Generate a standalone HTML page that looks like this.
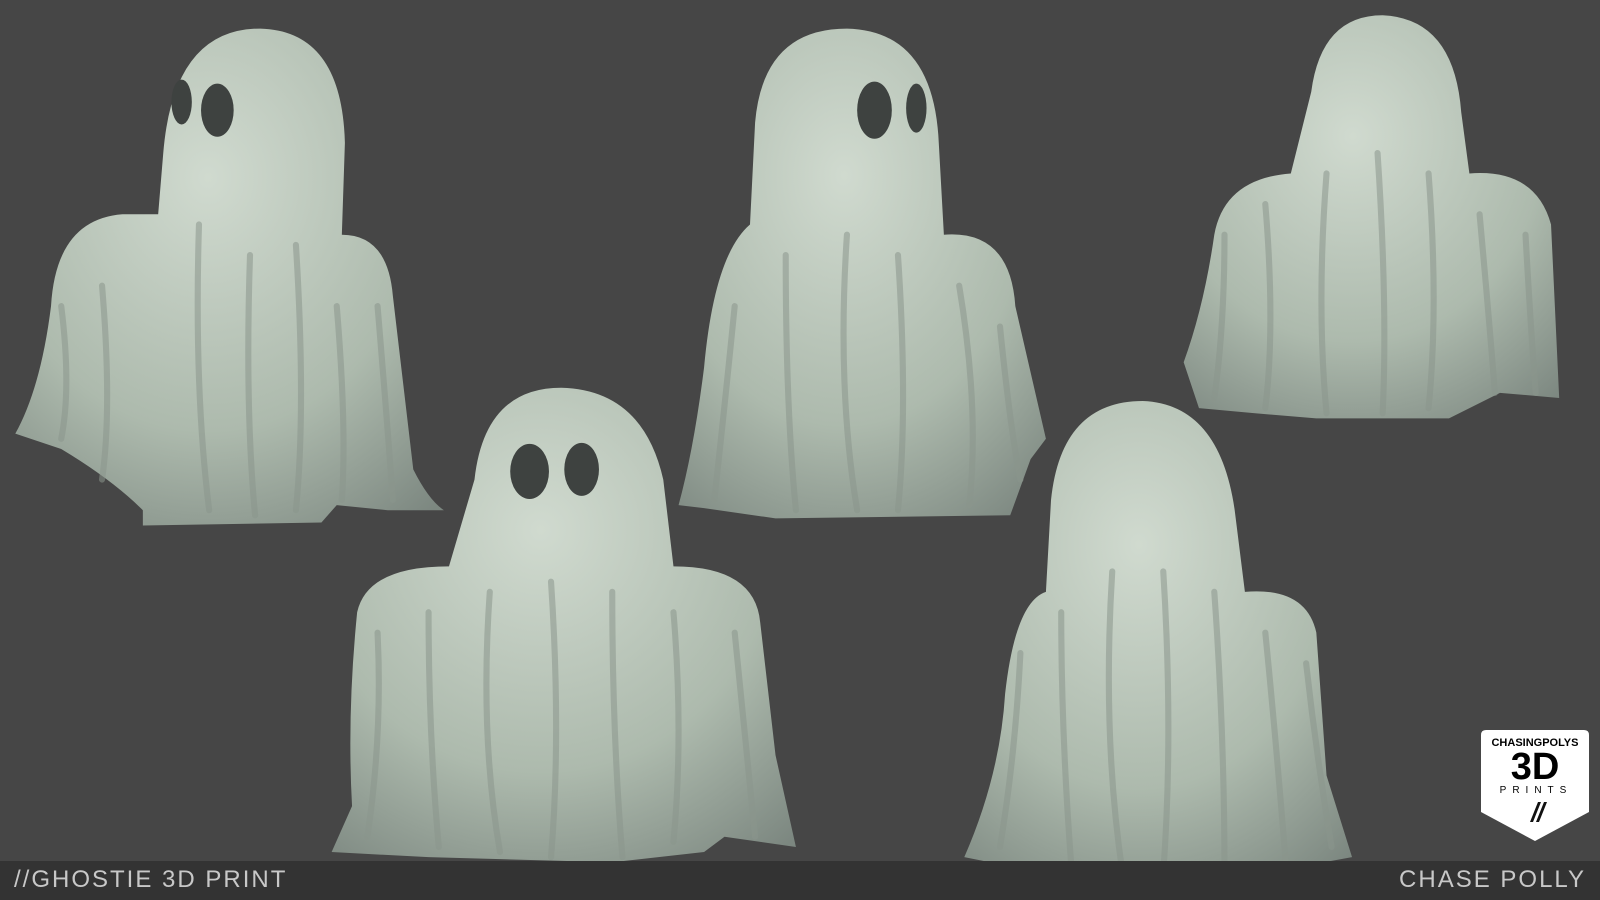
<!DOCTYPE html><html><head><style>
html,body{margin:0;width:1600px;height:900px;overflow:hidden;background:#464646;font-family:"Liberation Sans",sans-serif}
.bar{position:absolute;left:0;top:861px;width:1600px;height:39px;background:#333}
.t{position:absolute;top:866px;color:#c8c8c8;font-size:24px;letter-spacing:2px}
</style></head><body>
<svg width="1600" height="900" viewBox="0 0 1568 882" style="position:absolute;left:0;top:0">
<defs>
<radialGradient id="g" cx="0.45" cy="0.3" r="0.85"><stop offset="0" stop-color="#d0dacf"/><stop offset="0.6" stop-color="#adbaad"/><stop offset="1" stop-color="#7c8780"/></radialGradient>
</defs>
<g fill="url(#g)">
<path d="M160 150 Q170 28 255 28 Q335 30 338 140 L335 230 Q380 230 385 290 L405 460 Q420 490 435 500 L380 500 L330 495 L315 512 L140 515 L140 500 Q110 470 60 440 L15 425 Q40 380 50 300 Q55 215 120 210 L155 210 Z"/>
<path d="M740 120 Q748 28 830 28 Q915 30 920 140 L925 230 Q990 225 995 300 L1025 430 L1010 450 L990 505 L760 508 L690 498 L665 495 Q680 440 690 360 Q700 250 735 220 Z"/>
<path d="M1285 90 Q1295 15 1355 15 Q1425 18 1432 110 L1440 170 Q1505 165 1520 220 L1528 390 L1470 385 L1420 410 L1290 410 L1230 405 L1175 400 L1160 355 Q1180 300 1190 230 Q1200 175 1265 170 Z"/>
<path d="M465 470 Q475 380 550 380 Q630 382 650 470 L660 555 Q740 555 745 610 L760 740 L780 830 L710 820 L690 835 L600 845 L420 840 L325 835 L345 790 Q340 700 350 600 Q360 555 440 555 Z"/>
<path d="M1030 490 Q1040 393 1120 393 Q1195 396 1210 500 L1220 580 Q1280 575 1290 620 L1300 760 L1325 840 L1270 850 L1180 862 L1020 855 L945 840 Q980 760 985 680 Q995 590 1025 580 Z"/>
</g>
<g fill="none" stroke="#8a968c" stroke-width="6" stroke-linecap="round" opacity="0.55">
<path d="M60 300 Q70 380 60 430 M100 280 Q110 400 100 470 M195 220 Q190 380 205 500 M245 250 Q240 400 250 505 M290 240 Q300 400 290 500 M330 300 Q340 420 335 490 M370 300 Q380 420 385 490"/>
<path d="M720 300 Q710 400 700 490 M770 250 Q770 400 780 500 M830 230 Q820 380 840 500 M880 250 Q890 400 880 500 M940 280 Q960 400 950 495 M980 320 Q990 420 1000 470"/>
<path d="M1200 230 Q1200 320 1190 390 M1240 200 Q1250 320 1240 400 M1300 170 Q1290 300 1300 405 M1350 150 Q1360 300 1355 405 M1400 170 Q1410 300 1400 400 M1450 210 Q1460 320 1465 385 M1495 230 Q1500 320 1505 385"/>
<path d="M370 620 Q375 720 360 820 M420 600 Q420 720 430 830 M480 580 Q470 720 490 835 M540 570 Q550 720 540 840 M600 580 Q600 720 610 840 M660 600 Q670 720 660 825 M720 620 Q730 720 740 820"/>
<path d="M1000 640 Q995 740 980 830 M1040 600 Q1040 720 1050 850 M1090 560 Q1080 720 1100 855 M1140 560 Q1150 720 1140 855 M1190 580 Q1200 720 1200 855 M1240 620 Q1250 720 1260 845 M1280 650 Q1290 740 1305 830"/>
</g>
<g fill="#3e4240">
<ellipse cx="178" cy="100" rx="10" ry="22"/><ellipse cx="213" cy="108" rx="16" ry="26"/>
<ellipse cx="857" cy="108" rx="17" ry="28"/><ellipse cx="898" cy="106" rx="10" ry="24"/>
<ellipse cx="519" cy="462" rx="19" ry="27"/><ellipse cx="570" cy="460" rx="17" ry="26"/>
</g>
</svg>
<div class="bar"></div>
<div class="t" style="left:14px">//GHOSTIE 3D PRINT</div>
<div class="t" style="right:14px">CHASE POLLY</div>
<svg width="110" height="112" viewBox="0 0 110 112" style="position:absolute;left:1480px;top:730px">
<path d="M6 0 H104 Q109 0 109 5 V82 L55 111 L1 82 V5 Q1 0 6 0 Z" fill="#fff"/>
<text x="55" y="16" font-size="11" font-weight="bold" text-anchor="middle" font-family="Liberation Sans">CHASINGPOLYS</text>
<text x="55" y="49" font-size="38" font-weight="bold" text-anchor="middle" font-family="Liberation Sans">3D</text>
<text x="56" y="63" font-size="10" letter-spacing="6" text-anchor="middle" font-family="Liberation Sans">PRINTS</text>
<path d="M50 92 L58 72 L61 72 L53 92 Z M56 92 L64 72 L67 72 L59 92 Z" fill="#111"/>
</svg>
</body></html>
